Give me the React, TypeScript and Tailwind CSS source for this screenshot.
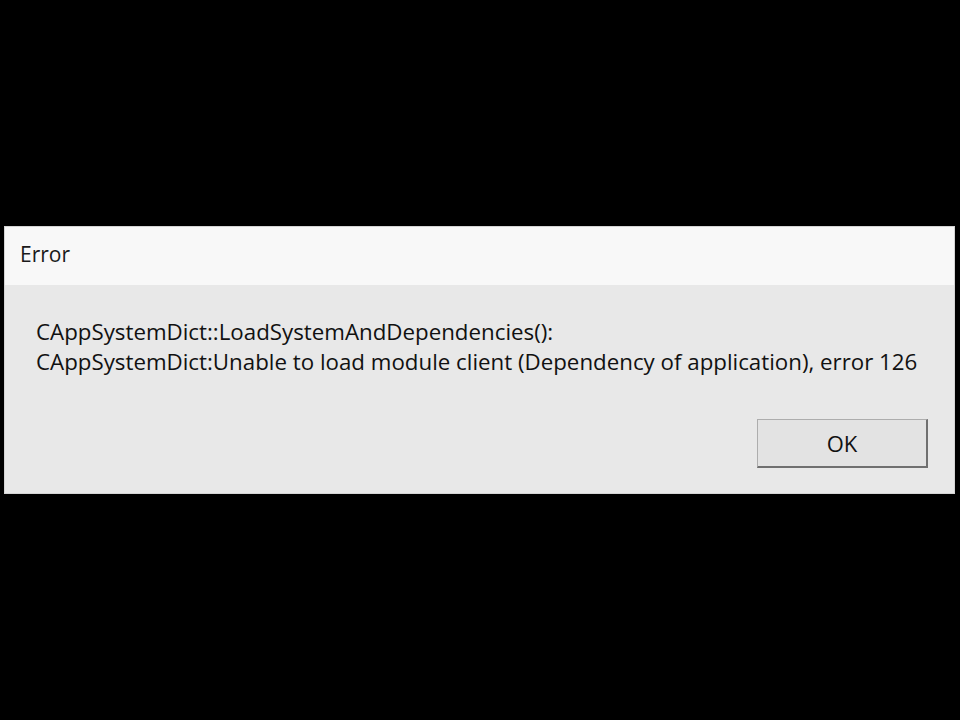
export default function App() {
  return (
    <div className="h-[720px] w-[960px] bg-black pt-[226px] pl-[4px]">
      <div
        className="w-[951px] h-[268px] flex flex-col border border-[#d4d4d4] bg-[#e8e8e8]"
        style={{ fontFamily: '"Open Sans", "Noto Sans", sans-serif' }}
      >
        <div className="h-[58px] bg-[#f8f8f8] flex items-center pl-[15px] pb-[2px]">
          <span className="text-[21px] text-[#1a1a1a]">Error</span>
        </div>
        <div className="flex-1 flex flex-col pl-[31px] pr-[26px] pt-[32px] bg-[#e8e8e8]">
          <div className="text-[22.3px] leading-[30px] text-[#111]">
            <p>CAppSystemDict::LoadSystemAndDependencies():</p>
            <p>CAppSystemDict:Unable to load module client (Dependency of application), error 126</p>
          </div>
          <div className="flex justify-end mt-[42px]">
            <button className="w-[171px] h-[49px] bg-[#e3e3e3] border border-[#adadad] border-r-[#707070] border-b-[#707070] border-r-2 border-b-2 text-[22px] text-[#111] flex items-center justify-center">
              OK
            </button>
          </div>
        </div>
      </div>
    </div>
  );
}
